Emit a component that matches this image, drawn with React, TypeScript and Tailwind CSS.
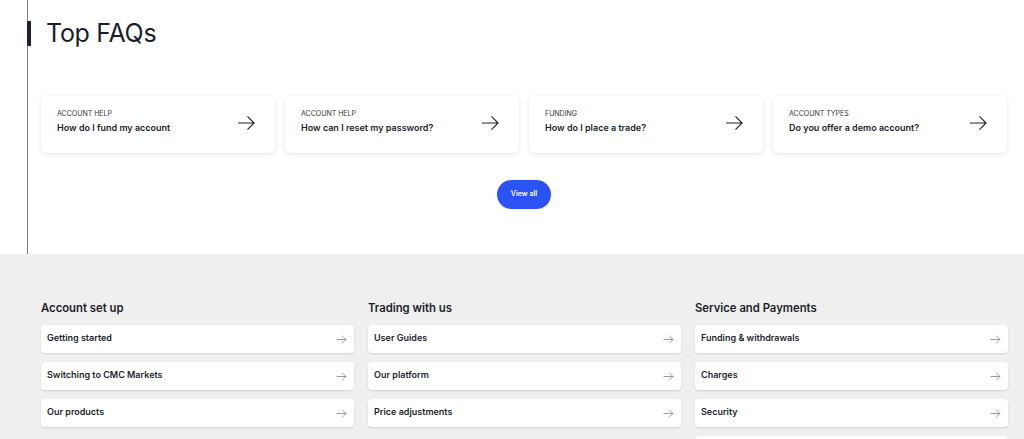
const TOP_FAQS = [
  { cat: "ACCOUNT HELP", q: "How do I fund my account" },
  { cat: "ACCOUNT HELP", q: "How can I reset my password?" },
  { cat: "FUNDING", q: "How do I place a trade?" },
  { cat: "ACCOUNT TYPES", q: "Do you offer a demo account?" },
];

const TOPICS = [
  { title: "Account set up", items: ["Getting started", "Switching to CMC Markets", "Our products"] },
  { title: "Trading with us", items: ["User Guides", "Our platform", "Price adjustments"] },
  { title: "Service and Payments", items: ["Funding & withdrawals", "Charges", "Security", ""] },
];

function Arrow({ className }: { className?: string }) {
  return (
    <svg viewBox="0 0 20 16" fill="none" stroke="currentColor" strokeWidth="1.2" className={className}>
      <path d="M1 8h17M11 1l7 7-7 7" />
    </svg>
  );
}

export default function App() {
  return (
    <main className="w-[1024px] h-[439px] overflow-hidden bg-white font-['Inter',sans-serif] text-[#1b1f2a]">
      <section className="ml-[27px] border-l border-[#7d7d7d] h-[254px] pt-[21px] pr-[17px]">
        <div className="-ml-px border-l-[4px] border-[#1e2330] pl-[15px] h-[25px] flex items-center">
          <h1 className="text-[25px] leading-none tracking-[-0.3px] text-[#1b1f2a]">Top FAQs</h1>
        </div>

        <div className="mt-[50px] pl-[13px] grid grid-cols-4 gap-[10px]">
          {TOP_FAQS.map((f) => (
            <div
              key={f.q}
              className="h-[57px] bg-white rounded-[6px] shadow-[0_1px_4px_rgba(0,0,0,0.12)] pl-[16px] pr-[19px] flex items-center justify-between"
            >
              <div className="flex flex-col -mt-[6px]">
                <span className="text-[7px] leading-[9px] text-[#333] uppercase">{f.cat}</span>
                <span className="mt-[4px] text-[9px] leading-[12px] font-semibold text-[#1b1f2a]">{f.q}</span>
              </div>
              <Arrow className="w-[19px] h-[16px] text-[#222] -mt-[4px]" />
            </div>
          ))}
        </div>

        <div className="mt-[27px] flex justify-center pl-[13px]">
          <button className="w-[54px] h-[29px] rounded-full bg-[#2a52f4] text-white text-[7px] font-semibold">
            View all
          </button>
        </div>
      </section>

      <section className="bg-[#efefef] h-[185px] pt-[46px] pl-[41px] pr-[16px]">
        <div className="grid grid-cols-3 gap-[14px]">
          {TOPICS.map((t) => (
            <div key={t.title}>
              <h2 className="text-[11.3px] leading-[16px] font-semibold text-[#1b1f2a]">{t.title}</h2>
              <div className="mt-[9px] flex flex-col gap-[9px]">
                {t.items.map((it, i) => (
                  <div
                    key={i}
                    className="h-[28px] bg-white rounded-[4px] shadow-[0_1px_2px_rgba(0,0,0,0.12)] pl-[6px] pr-[7px] flex items-center justify-between"
                  >
                    <span className="text-[9px] font-semibold text-[#1b1f2a] -mt-[3px]">{it}</span>
                    {it && <Arrow className="w-[11px] h-[9px] text-[#666]" />}
                  </div>
                ))}
              </div>
            </div>
          ))}
        </div>
      </section>
    </main>
  );
}
